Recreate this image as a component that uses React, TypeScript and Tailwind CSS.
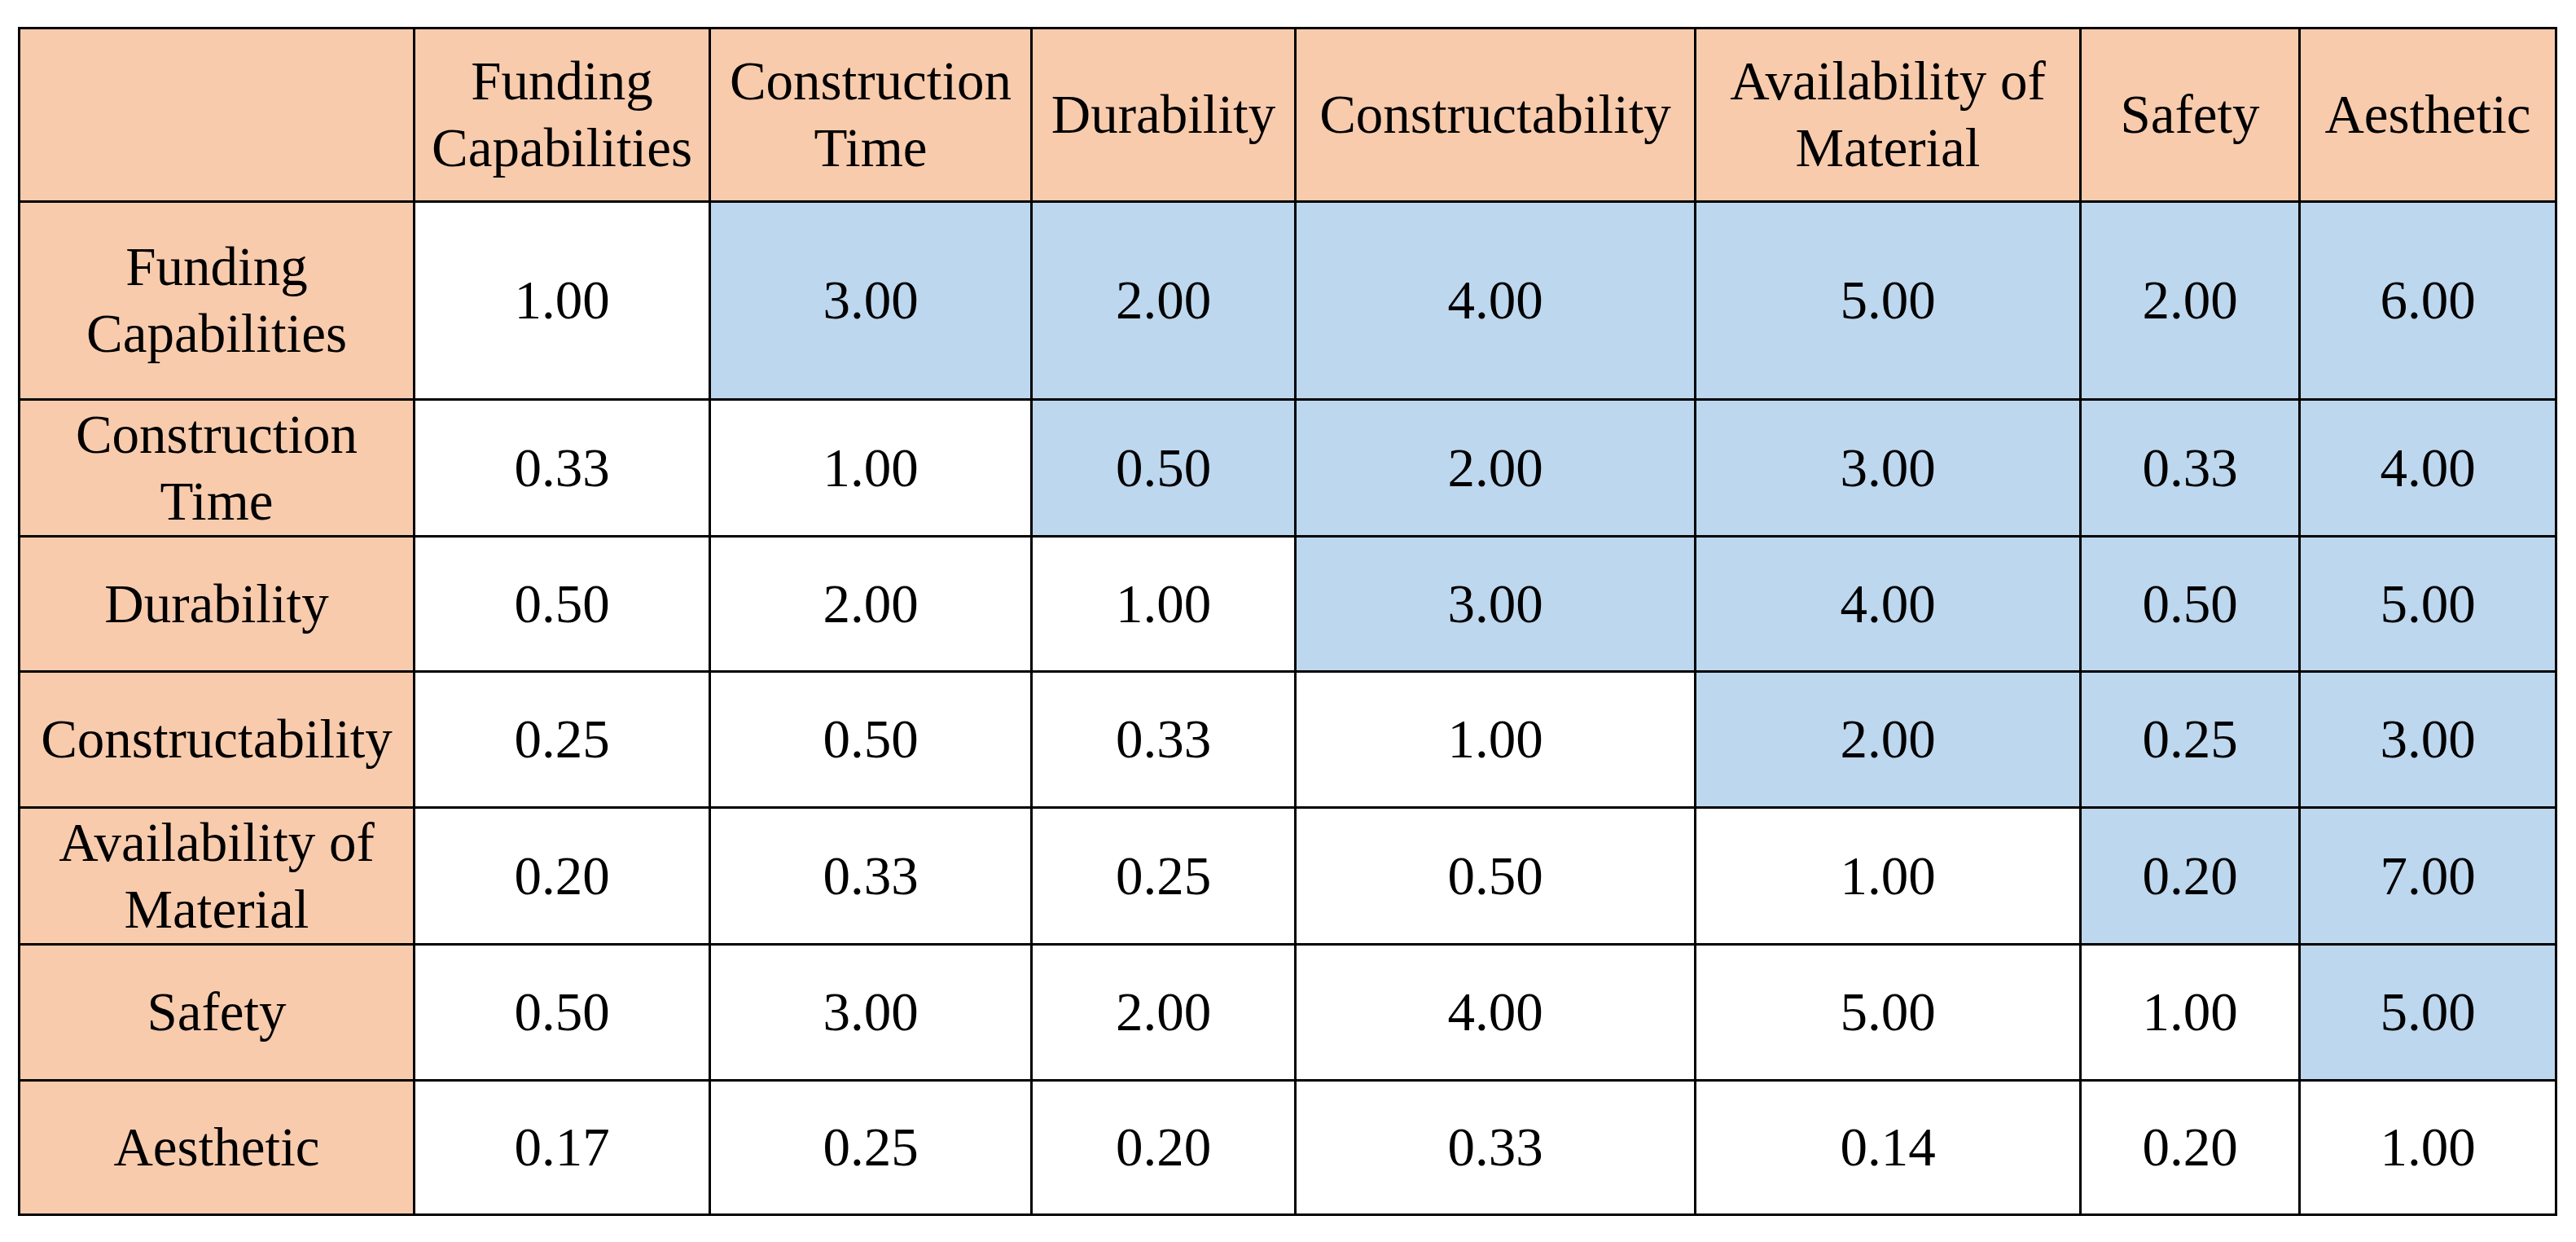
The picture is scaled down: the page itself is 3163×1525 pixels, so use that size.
const headers = [
  "Funding Capabilities",
  "Construction Time",
  "Durability",
  "Constructability",
  "Availability of Material",
  "Safety",
  "Aesthetic",
];

const values = [
  ["1.00", "3.00", "2.00", "4.00", "5.00", "2.00", "6.00"],
  ["0.33", "1.00", "0.50", "2.00", "3.00", "0.33", "4.00"],
  ["0.50", "2.00", "1.00", "3.00", "4.00", "0.50", "5.00"],
  ["0.25", "0.50", "0.33", "1.00", "2.00", "0.25", "3.00"],
  ["0.20", "0.33", "0.25", "0.50", "1.00", "0.20", "7.00"],
  ["0.50", "3.00", "2.00", "4.00", "5.00", "1.00", "5.00"],
  ["0.17", "0.25", "0.20", "0.33", "0.14", "0.20", "1.00"],
];

export default function App() {
  return (
    <div className="min-h-screen bg-white pl-[22px] pt-[33px] font-['Liberation_Serif','Times_New_Roman',serif] text-black">
      <div className="inline-grid grid-cols-[482px_360px_392px_321px_488px_470px_266px_312px] grid-rows-[210px_240px_165px_163px_164px_165px_164px_162px] gap-[3px] bg-black p-[3px] text-[67px] leading-[1.22]">
        {/* Header row */}
        <div className="bg-[#f8cbad]" />
        {headers.map((h) => (
          <div
            key={h}
            className="flex items-center justify-center bg-[#f8cbad] px-1 text-center"
          >
            {h}
          </div>
        ))}

        {/* Body rows */}
        {values.map((row, i) => (
          <>
            <div
              key={"label-" + i}
              className="flex items-center justify-center bg-[#f8cbad] px-1 text-center"
            >
              {headers[i]}
            </div>
            {row.map((v, j) => (
              <div
                key={i + "-" + j}
                className={
                  "flex items-center justify-center text-center " +
                  (j > i ? "bg-[#bdd7ee]" : "bg-white")
                }
              >
                {v}
              </div>
            ))}
          </>
        ))}
      </div>
    </div>
  );
}
